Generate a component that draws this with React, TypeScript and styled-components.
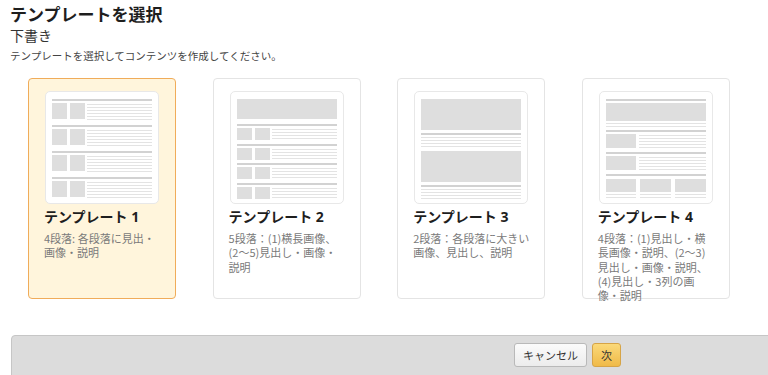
import styled, { createGlobalStyle } from "styled-components";

const GlobalStyle = createGlobalStyle`
  html, body {
    margin: 0;
    padding: 0;
    background: #fff;
    overflow: hidden;
  }
  body {
    font-family: "Noto Sans", "Noto Sans CJK JP", sans-serif;
    color: #222;
  }
`;

const Page = styled.div`
  padding: 4px 0 0 10px;
`;
const Title = styled.h1`
  margin: 0;
  font-size: 17px;
  line-height: 22px;
  font-weight: 700;
  color: #1e1e1e;
`;
const Sub = styled.div`
  font-size: 14px;
  line-height: 20px;
  color: #333;
`;
const Lead = styled.p`
  margin: 2px 0 0;
  font-size: 10.5px;
  line-height: 16px;
  color: #444;
`;
const CardRow = styled.div`
  display: flex;
  gap: 36.6px;
  margin: 14px 0 0 18px;
`;
const Card = styled.div<{ $selected?: boolean }>`
  box-sizing: border-box;
  width: 148px;
  height: 221px;
  padding: 12px 16px 0 16px;
  border: 1px solid ${(p) => (p.$selected ? "#f0ac5a" : "#e4e4e4")};
  border-radius: 4px;
  background: ${(p) => (p.$selected ? "#fff5dc" : "#fff")};
  display: flex;
  flex-direction: column;
`;
const Thumb = styled.div`
  box-sizing: border-box;
  width: 114px;
  height: 113px;
  padding: 7px 6px 0 6px;
  background: #fff;
  border: 1px solid #e8e8e8;
  border-radius: 5px;
  flex-shrink: 0;
  svg {
    display: block;
  }
`;
const CardTitle = styled.div`
  margin-top: 3px;
  font-size: 14px;
  line-height: 20px;
  font-weight: 700;
  color: #1e1e1e;
  margin-left: -1px;
`;
const CardText = styled.div`
  margin: 4px -1.5px 0 -1px;
  font-family: "Noto Sans CJK JP", sans-serif;
  font-size: 11px;
  line-height: 14.3px;
  color: #7a7a7a;
`;
const Footer = styled.div`
  box-sizing: border-box;
  margin: 36px -20px 0 1px;
  height: 60px;
  padding: 7px 166px 0 0;
  background: #dcdcdc;
  border: 1px solid #c6c6c6;
  border-radius: 4px;
  display: flex;
  justify-content: flex-end;
  align-items: flex-start;
  gap: 5px;
`;
const Button = styled.button<{ $primary?: boolean }>`
  box-sizing: border-box;
  height: 24px;
  padding: 0 8px;
  font-family: "Noto Sans CJK JP", sans-serif;
  font-size: 11px;
  color: #333;
  border-radius: 3px;
  border: 1px solid ${(p) => (p.$primary ? "#d6a447" : "#b9b9b9")};
  background: ${(p) =>
    p.$primary
      ? "linear-gradient(#fbd97a, #f0ba48)"
      : "linear-gradient(#fbfbfb, #ececec)"};
  cursor: pointer;
`;

const HEAD = "#d2d2d2";
const BLOCK = "#dedede";
const LINE = "#e3e3e3";

function Lines({ x, y, w, n }: { x: number; y: number; w: number; n: number }) {
  return (
    <>
      {Array.from({ length: n }).map((_, k) => (
        <rect key={k} x={x} y={y + k * 3} width={w} height={1} fill={LINE} />
      ))}
    </>
  );
}

function Section({ y, sq, lines }: { y: number; sq: number; lines: number }) {
  return (
    <>
      <rect x={0} y={y} width={100} height={2} fill={HEAD} />
      <rect x={0} y={y + 4} width={15} height={sq} fill={BLOCK} />
      <rect x={18} y={y + 4} width={15} height={sq} fill={BLOCK} />
      <Lines x={35} y={y + 5} w={65} n={lines} />
    </>
  );
}

function Thumb1() {
  return (
    <svg width="100" height="100" viewBox="0 0 100 100">
      {[0, 26, 52, 78].map((y) => (
        <Section key={y} y={y} sq={16} lines={6} />
      ))}
    </svg>
  );
}

function Thumb2() {
  return (
    <svg width="100" height="100" viewBox="0 0 100 100">
      <rect x={0} y={0} width={100} height={20} fill={BLOCK} />
      {[25, 45, 64, 84].map((y) => (
        <Section key={y} y={y} sq={12} lines={4} />
      ))}
    </svg>
  );
}

function Thumb3() {
  return (
    <svg width="100" height="100" viewBox="0 0 100 100">
      <rect x={0} y={0} width={100} height={31} fill={BLOCK} />
      <rect x={0} y={34} width={100} height={2} fill={HEAD} />
      <Lines x={0} y={38} w={100} n={4} />
      <rect x={0} y={52} width={100} height={31} fill={BLOCK} />
      <rect x={0} y={86} width={100} height={2} fill={HEAD} />
      <Lines x={0} y={90} w={100} n={4} />
    </svg>
  );
}

function Thumb4() {
  return (
    <svg width="100" height="100" viewBox="0 0 100 100">
      <rect x={0} y={0} width={100} height={2} fill={HEAD} />
      <rect x={0} y={4} width={100} height={18} fill={BLOCK} />
      <Lines x={0} y={24} w={100} n={2} />
      <rect x={0} y={31} width={100} height={2} fill={HEAD} />
      <rect x={0} y={35} width={30} height={14} fill={BLOCK} />
      <Lines x={33} y={36} w={67} n={5} />
      <rect x={0} y={53} width={100} height={2} fill={HEAD} />
      <rect x={0} y={57} width={30} height={14} fill={BLOCK} />
      <Lines x={33} y={58} w={67} n={5} />
      <rect x={0} y={75} width={100} height={2} fill={HEAD} />
      {[
        [0, 30],
        [34, 31],
        [69, 31],
      ].map(([x, w]) => (
        <g key={x}>
          <rect x={x} y={80} width={w} height={13} fill={BLOCK} />
          <Lines x={x} y={95} w={w} n={2} />
        </g>
      ))}
    </svg>
  );
}

const templates = [
  { id: 1, title: "テンプレート 1", text: "4段落: 各段落に見出・画像・説明", Art: Thumb1 },
  { id: 2, title: "テンプレート 2", text: "5段落：(1)横長画像、(2〜5)見出し・画像・説明", Art: Thumb2 },
  { id: 3, title: "テンプレート 3", text: "2段落：各段落に大きい画像、見出し、説明", Art: Thumb3 },
  {
    id: 4,
    title: "テンプレート 4",
    text: "4段落：(1)見出し・横長画像・説明、(2〜3)見出し・画像・説明、(4)見出し・3列の画像・説明",
    Art: Thumb4,
  },
];

export default function App() {
  return (
    <>
      <GlobalStyle />
      <Page>
        <Title>テンプレートを選択</Title>
        <Sub>下書き</Sub>
        <Lead>テンプレートを選択してコンテンツを作成してください。</Lead>
        <CardRow>
          {templates.map(({ id, title, text, Art }) => (
            <Card key={id} $selected={id === 1}>
              <Thumb>
                <Art />
              </Thumb>
              <CardTitle>{title}</CardTitle>
              <CardText>{text}</CardText>
            </Card>
          ))}
        </CardRow>
        <Footer>
          <Button>キャンセル</Button>
          <Button $primary>次</Button>
        </Footer>
      </Page>
    </>
  );
}
